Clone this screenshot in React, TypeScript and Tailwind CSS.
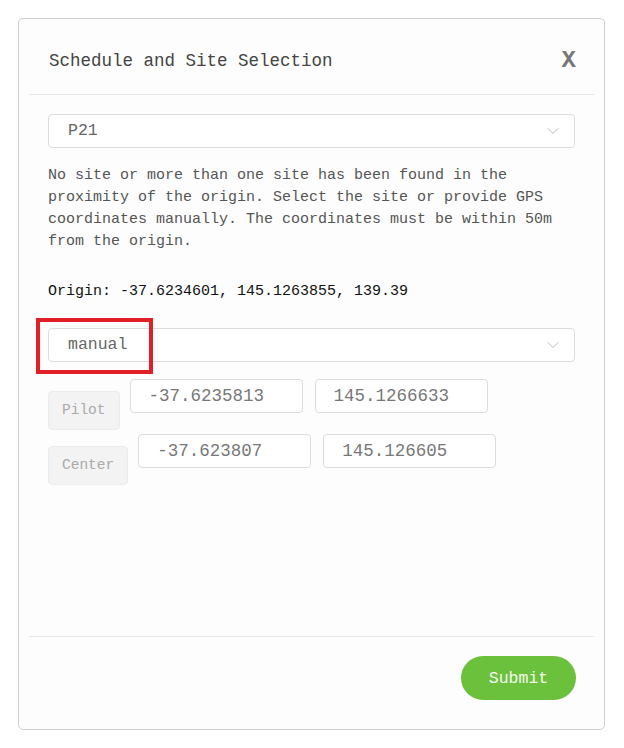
import { ChevronDown } from 'lucide-react';

const mono = { fontFamily: '"Liberation Mono", "Courier New", monospace' };

function Select({ value }: { value: string }) {
  return (
    <div className="h-[34px] w-full border border-[#dcdcdc] rounded-[4px] bg-white flex items-center justify-between pl-[19px] pr-[11px]">
      <span className="text-[16.5px] text-[#666]">{value}</span>
      <ChevronDown size={20} strokeWidth={1.1} className="text-[#b4b4b4]" />
    </div>
  );
}

function CoordInput({ value }: { value: string }) {
  return (
    <div className="h-[34px] w-[173px] border border-[#dcdcdc] rounded-[4px] bg-white flex items-center pl-[18px] text-[17.5px] text-[#777]">
      {value}
    </div>
  );
}

function CoordRow({ label, lat, lng }: { label: string; lat: string; lng: string }) {
  return (
    <div className="flex items-start">
      <div className="mt-[12px] h-[39px] px-[13px] flex items-center bg-[#f3f3f4] border border-[#ececec] rounded-[4px] text-[14.5px] text-[#aaa]">
        {label}
      </div>
      <div className="ml-[10px] flex gap-[12px]">
        <CoordInput value={lat} />
        <CoordInput value={lng} />
      </div>
    </div>
  );
}

export default function App() {
  return (
    <div className="min-h-[748px] bg-white pt-[18px] pl-[18px]" style={mono}>
      <div className="w-[587px] h-[712px] border border-[#cfcfcf] rounded-[5px] bg-[#fdfdfd] flex flex-col">
        <div className="mx-[10px] h-[76px] border-b border-[#e8e8e8] flex items-center justify-between pl-[20px] pr-[18px]">
          <h2 className="text-[17.5px] text-[#444] pt-[9px]">Schedule and Site Selection</h2>
          <span className="text-[24px] font-bold text-[#777] pt-[8px]">X</span>
        </div>

        <div className="flex-1 px-[29px] pt-[19px] relative">
          <Select value="P21" />
          <p className="mt-[17px] text-[15px] leading-[22px] text-[#555]">
            No site or more than one site has been found in the proximity of the origin. Select the
            site or provide GPS coordinates manually. The coordinates must be within 50m from the
            origin.
          </p>
          <p className="mt-[28px] text-[15px] leading-[22px] text-[#111]">
            Origin: -37.6234601, 145.1263855, 139.39
          </p>
          <div className="mt-[25px] relative">
            <Select value="manual" />
            <div className="absolute left-[-12px] top-[-10px] w-[117px] h-[56px] border-[4px] border-[#e01f26]" />
          </div>
          <div className="mt-[17px] flex flex-col gap-[4px]">
            <CoordRow label="Pilot" lat="-37.6235813" lng="145.1266633" />
            <CoordRow label="Center" lat="-37.623807" lng="145.126605" />
          </div>
        </div>

        <div className="mx-[10px] border-t border-[#e8e8e8] h-[93px] flex items-start justify-end pt-[19px] pr-[18px]">
          <button className="h-[44px] w-[115px] rounded-full bg-[#6cc13c] text-[#f4fbef] text-[16.5px] pt-[2px]">
            Submit
          </button>
        </div>
      </div>
    </div>
  );
}
